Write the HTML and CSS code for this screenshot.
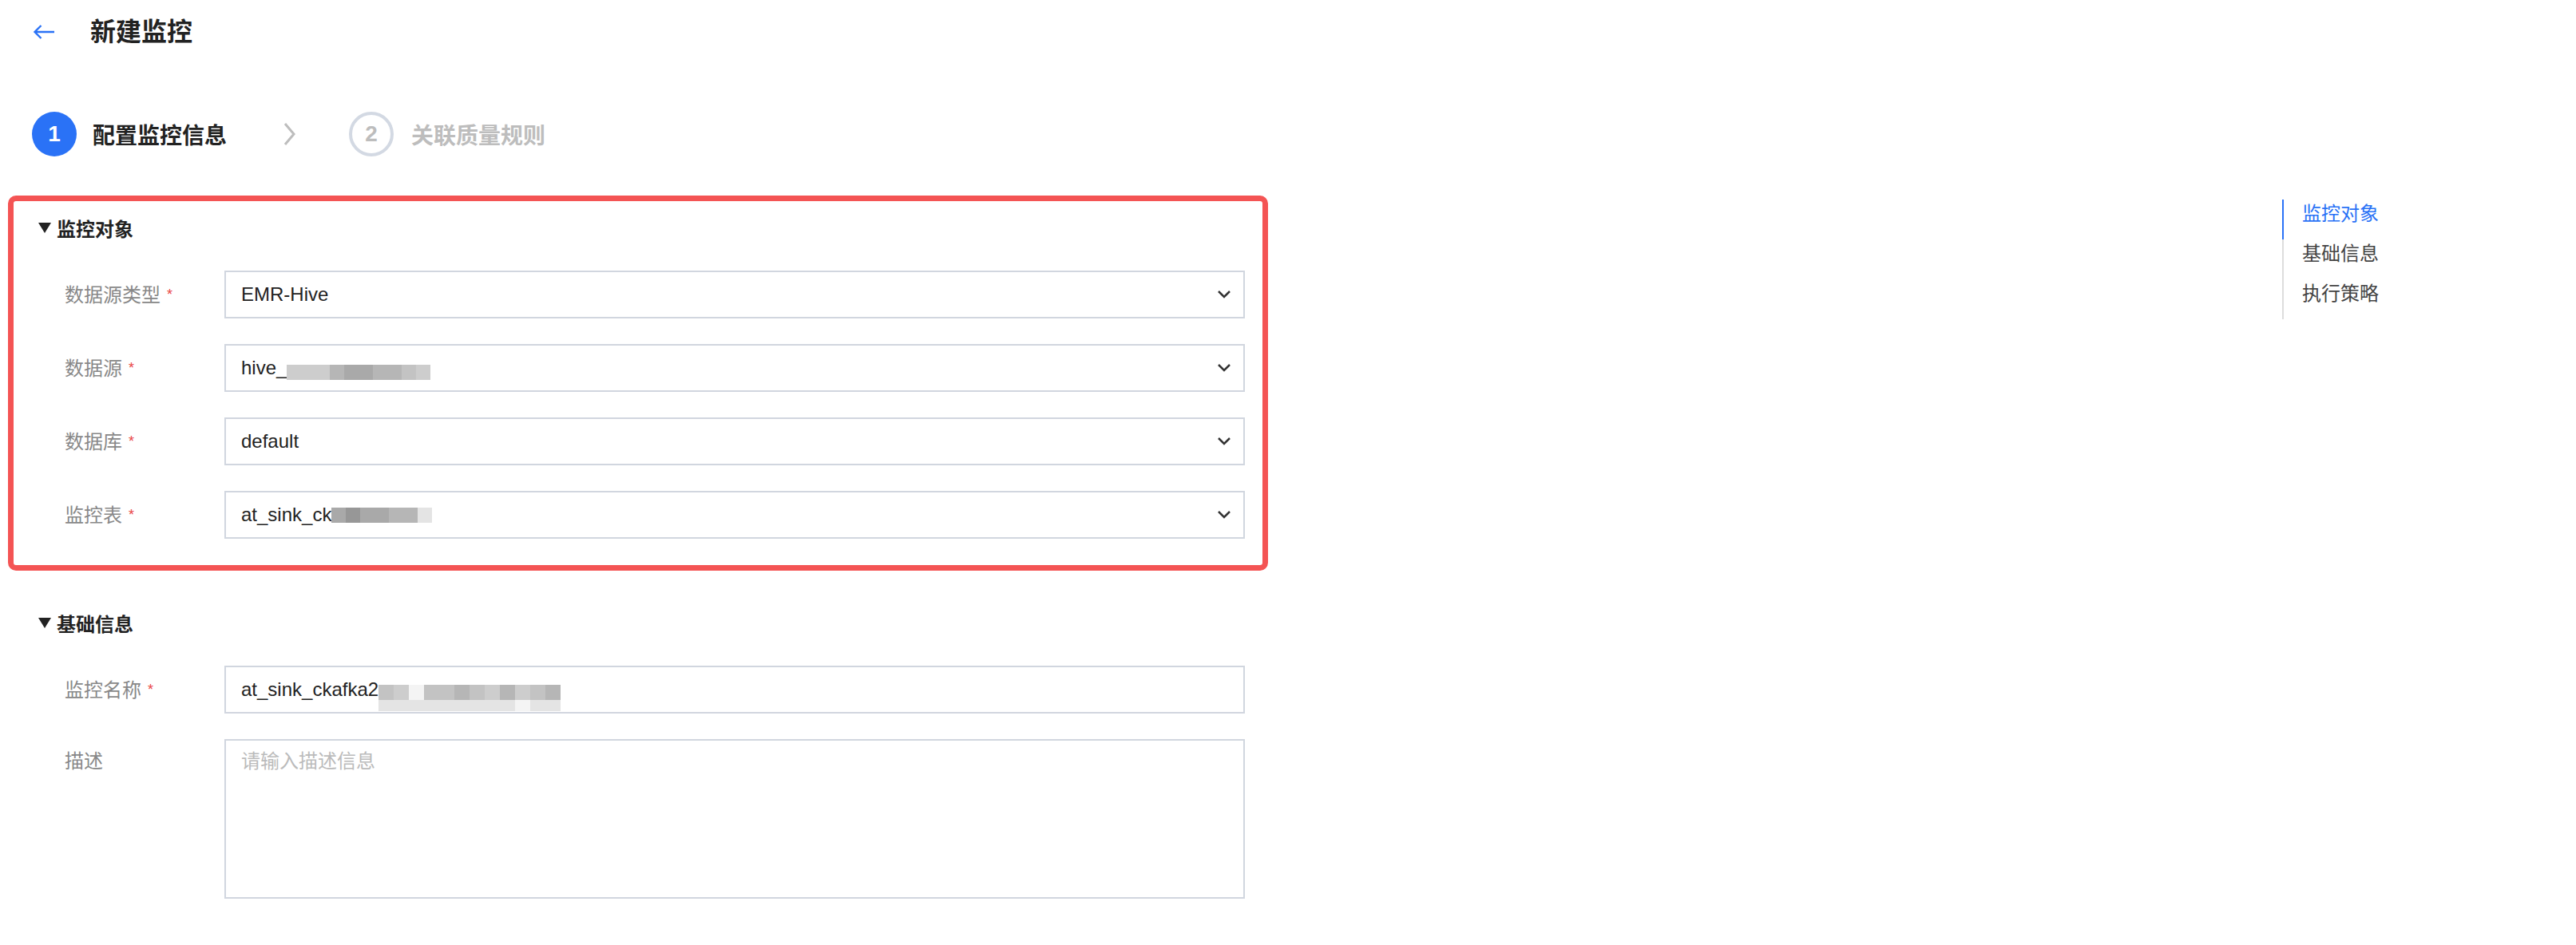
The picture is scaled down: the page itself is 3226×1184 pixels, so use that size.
FILE: index.html
```html
<!DOCTYPE html>
<html lang="zh-CN">
<head>
    <meta charset="UTF-8">
    <meta name="viewport" content="width=device-width, initial-scale=1.0">
    <title>新建监控</title>
    <link rel="stylesheet" href="styles.css">
</head>
<body>
    <div class="page-header">
        <a class="back" href="#">
            <svg width="28" height="20" viewBox="0 0 28 20"><path d="M27 10H2.5M10.5 2L2.5 10l8 8" fill="none" stroke="#2a72f6" stroke-width="2.4"/></svg>
        </a>
        <h1>新建监控</h1>
    </div>

    <div class="steps">
        <div class="step active">
            <span class="step-num">1</span>
            <span class="step-title">配置监控信息</span>
        </div>
        <svg class="step-arrow" width="16" height="30" viewBox="0 0 16 30"><path d="M2 2l11 13L2 28" fill="none" stroke="#bdbdbd" stroke-width="3"/></svg>
        <div class="step todo">
            <span class="step-num">2</span>
            <span class="step-title">关联质量规则</span>
        </div>
    </div>

    <div class="layout">
        <div class="form">
            <section class="form-section highlight">
                <h3 class="section-title"><span class="caret"></span>监控对象</h3>
                <div class="form-body">
                    <div class="form-row">
                        <label>数据源类型<i class="req">*</i></label>
                        <div class="select">
                            <span class="value">EMR-Hive</span>
                            <svg class="arrow" width="18" height="12" viewBox="0 0 18 12"><path d="M2 2l7 7 7-7" fill="none" stroke="#333" stroke-width="2.5"/></svg>
                        </div>
                    </div>
                    <div class="form-row">
                        <label>数据源<i class="req">*</i></label>
                        <div class="select">
                            <span class="value">hive_</span>
                            <span class="mosaic low">
                                <i class="s3"></i><i class="s3"></i><i class="s3"></i><i class="s5"></i><i class="s6"></i><i class="s6"></i><i class="s5"></i><i class="s5"></i><i class="s4"></i><i class="s3"></i>
                            </span>
                            <svg class="arrow" width="18" height="12" viewBox="0 0 18 12"><path d="M2 2l7 7 7-7" fill="none" stroke="#333" stroke-width="2.5"/></svg>
                        </div>
                    </div>
                    <div class="form-row">
                        <label>数据库<i class="req">*</i></label>
                        <div class="select">
                            <span class="value">default</span>
                            <svg class="arrow" width="18" height="12" viewBox="0 0 18 12"><path d="M2 2l7 7 7-7" fill="none" stroke="#333" stroke-width="2.5"/></svg>
                        </div>
                    </div>
                    <div class="form-row">
                        <label>监控表<i class="req">*</i></label>
                        <div class="select">
                            <span class="value">at_sink_ck</span>
                            <span class="mosaic">
                                <i class="s6"></i><i class="s7"></i><i class="s6"></i><i class="s6"></i><i class="s5"></i><i class="s5"></i><i class="s2"></i>
                            </span>
                            <svg class="arrow" width="18" height="12" viewBox="0 0 18 12"><path d="M2 2l7 7 7-7" fill="none" stroke="#333" stroke-width="2.5"/></svg>
                        </div>
                    </div>
                </div>
            </section>

            <section class="form-section">
                <h3 class="section-title"><span class="caret"></span>基础信息</h3>
                <div class="form-body">
                    <div class="form-row">
                        <label>监控名称<i class="req">*</i></label>
                        <div class="input">
                            <span class="value">at_sink_ckafka2</span>
                            <span class="mosaic double">
                                <span class="mosaic-row">
                                    <i class="s4"></i><i class="s3"></i><i class="s1"></i><i class="s4"></i><i class="s4"></i><i class="s5"></i><i class="s4"></i><i class="s3"></i><i class="s5"></i><i class="s3"></i><i class="s4"></i><i class="s5"></i>
                                </span>
                                <span class="mosaic-row">
                                    <i class="s2"></i><i class="s2"></i><i class="s2"></i><i class="s2"></i><i class="s2"></i><i class="s2"></i><i class="s2"></i><i class="s2"></i><i class="s2"></i><i class="s1"></i><i class="s2"></i><i class="s2"></i>
                                </span>
                            </span>
                        </div>
                    </div>
                    <div class="form-row top">
                        <label>描述</label>
                        <textarea placeholder="请输入描述信息"></textarea>
                    </div>
                </div>
            </section>
        </div>

        <nav class="outline">
            <a href="#" class="active">监控对象</a>
            <a href="#">基础信息</a>
            <a href="#">执行策略</a>
        </nav>
    </div>
</body>
</html>
```

FILE: styles.css
```css
* {
    box-sizing: border-box;
}
body {
    margin: 0;
    font-family: "Liberation Sans", "Noto Sans CJK SC", sans-serif;
    color: #222;
    background: #fff;
}
.page-header {
    display: flex;
    align-items: center;
    gap: 44px;
    height: 80px;
    padding-left: 41px;
}
.back svg {
    display: block;
}
.page-header h1 {
    margin: 0;
    font-size: 32px;
    font-weight: 700;
    line-height: 40px;
}
.steps {
    display: flex;
    align-items: center;
    height: 56px;
    margin-top: 60px;
    padding-left: 40px;
}
.step {
    display: flex;
    align-items: center;
    gap: 20px;
}
.step.todo {
    gap: 22px;
}
.step-num {
    display: flex;
    align-items: center;
    justify-content: center;
    width: 56px;
    height: 56px;
    border-radius: 50%;
    font-size: 28px;
    font-weight: 700;
}
.step.active .step-num {
    background: #2a72f6;
    color: #fff;
}
.step.todo .step-num {
    border: 4px solid #d3d9e3;
    color: #bdbdbd;
}
.step-title {
    font-size: 28px;
    font-weight: 700;
}
.step.todo .step-title {
    color: #bdbdbd;
}
.step-arrow {
    margin: 0 66px 0 71px;
}
.layout {
    display: flex;
    align-items: flex-start;
    margin-top: 56px;
}
.form {
    width: 1564px;
    margin-left: 17px;
}
.form-section {
    padding: 17px 22px 33px 31px;
}
.form-section + .form-section {
    margin-top: 39px;
}
.highlight {
    outline: 7px solid #f45454;
    border-radius: 3px;
}
.section-title {
    display: flex;
    align-items: center;
    height: 32px;
    margin: 0;
    font-size: 24px;
    font-weight: 700;
}
.caret {
    width: 0;
    height: 0;
    margin-right: 7px;
    border-left: 8px solid transparent;
    border-right: 8px solid transparent;
    border-top: 13px solid #222;
}
.form-body {
    display: flex;
    flex-direction: column;
    gap: 32px;
    margin-top: 38px;
    padding-left: 33px;
}
.form-row {
    display: flex;
    align-items: center;
}
.form-row.top {
    align-items: flex-start;
}
.form-row label {
    flex: none;
    width: 200px;
    font-size: 24px;
    line-height: 56px;
    color: #888;
}
.req {
    margin-left: 8px;
    font-style: normal;
    font-size: 18px;
    color: #e94646;
    vertical-align: 3px;
}
.select, .input {
    flex: 1;
    display: flex;
    align-items: center;
    height: 60px;
    padding: 0 15px 0 19px;
    border: 2px solid #d1d6df;
    font-size: 24px;
    color: #222;
}
.select .arrow {
    margin-left: auto;
}
.mosaic {
    display: flex;
    height: 19px;
}
.mosaic.low {
    margin-top: 10px;
}
.mosaic.double {
    flex-direction: column;
    height: 33px;
    margin-top: 20px;
}
.mosaic-row {
    display: flex;
    height: 19px;
}
.mosaic-row + .mosaic-row {
    height: 14px;
}
.mosaic i {
    width: 18px;
    height: 100%;
}
.mosaic.double i {
    width: 19px;
}
.s1 { background: #f4f4f4; }
.s2 { background: #e4e4e4; }
.s3 { background: #cdcdcd; }
.s4 { background: #c3c3c3; }
.s5 { background: #b6b6b6; }
.s6 { background: #a9a9a9; }
.s7 { background: #979797; }
textarea {
    flex: 1;
    height: 200px;
    padding: 12px 19px;
    border: 2px solid #d1d6df;
    border-radius: 0;
    font-family: "Liberation Sans", "Noto Sans CJK SC", sans-serif;
    font-size: 24px;
    line-height: 28px;
    color: #222;
    resize: none;
    outline: none;
}
textarea::placeholder {
    color: #bbb;
}
.outline {
    width: 250px;
    margin: -2px 118px 0 auto;
    border-left: 2px solid #ddd;
}
.outline a {
    display: block;
    height: 50px;
    margin-left: -2px;
    padding: 4px 0 0 23px;
    border-left: 2px solid transparent;
    font-size: 24px;
    line-height: 28px;
    color: #444;
    text-decoration: none;
}
.outline a.active {
    border-left-color: #2a72f6;
    color: #2a72f6;
}
```
